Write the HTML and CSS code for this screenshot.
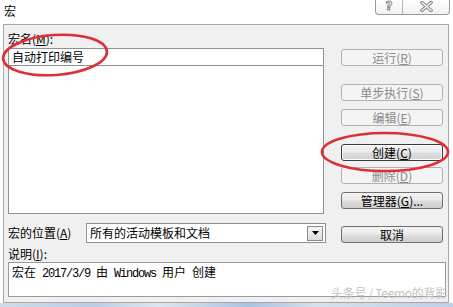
FILE: index.html
```html
<!DOCTYPE html>
<html lang="zh">
<head>
<meta charset="utf-8">
<title>宏</title>
<link rel="stylesheet" href="styles.css">
</head>
<body>
<div class="titlebar">
  <span class="title">宏</span>
  <div class="caption-btns">
    <span class="cbtn help">?</span>
    <span class="cbtn close">
      <svg width="13" height="11" viewBox="0 0 13 11">
        <path d="M2 1.5 L11 9.5 M11 1.5 L2 9.5" stroke="#8c8c8c" stroke-width="3.4" fill="none" stroke-linecap="square"/>
        <path d="M2 1.5 L11 9.5 M11 1.5 L2 9.5" stroke="#ffffff" stroke-width="1.2" fill="none" stroke-linecap="square"/>
      </svg>
    </span>
  </div>
</div>
<div class="panel">
  <div class="grid">
    <div class="left-top">
      <div class="lbl">宏名(<u>M</u>):</div>
      <div class="name-input">自动打印编号</div>
      <div class="listbox"></div>
    </div>
    <div class="btn-col">
      <div class="btn disabled b-run">运行(<u>R</u>)</div>
      <div class="btn disabled b-step">单步执行(<u>S</u>)</div>
      <div class="btn disabled b-edit">编辑(<u>E</u>)</div>
      <div class="btn default b-create">创建(<u>C</u>)</div>
      <div class="btn disabled b-del">删除(<u>D</u>)</div>
      <div class="btn b-mgr">管理器(<u>G</u>)...</div>
    </div>
    <div class="loc-row">
      <span class="loc-lbl">宏的位置(<u>A</u>)</span>
      <div class="select">
        <span class="select-text">所有的活动模板和文档</span>
        <span class="drop">
          <svg width="7" height="4" viewBox="0 0 7 4"><path d="M0 0 H7 L3.5 4 Z" fill="#000"/></svg>
        </span>
      </div>
    </div>
    <div class="btn b-cancel">取消</div>
    <div class="desc-area">
      <div class="lbl2">说明(<u>I</u>):</div>
      <div class="desc-box">宏在<span class="lat"> 2017/3/9 </span>由<span class="lat"> Windows </span>用户<span class="lat"> </span>创建</div>
    </div>
  </div>
</div>
<div class="strip"></div>
<div class="watermark">头条号 / Teemo的背影</div>
<svg class="marks" width="453" height="307" viewBox="0 0 453 307">
  <ellipse cx="55" cy="55" rx="52" ry="20" transform="rotate(-4 55 55)" fill="none" stroke="#dd2f36" stroke-width="2.6"/>
  <ellipse cx="385" cy="152" rx="63" ry="19" fill="none" stroke="#dd2f36" stroke-width="2.6"/>
</svg>
</body>
</html>
```

FILE: styles.css
```css
* { box-sizing: border-box; }
html, body {
  margin: 0;
  padding: 0;
  background: #ffffff;
  width: 453px;
  height: 307px;
  overflow: hidden;
  font-family: "Noto Sans CJK SC", "Liberation Sans", sans-serif;
  font-size: 12px;
  color: #000;
}
body { position: relative; }
u { text-decoration: underline; }

.titlebar {
  height: 24px;
  display: flex;
  align-items: flex-start;
  padding-left: 4px;
  padding-right: 3px;
}
.title {
  line-height: 22px;
  font-size: 12px;
}
.caption-btns {
  margin-left: auto;
  margin-top: -1px;
  display: flex;
  height: 16px;
  border: 1px solid #9a9a9a;
  border-top: none;
  border-radius: 0 0 4px 4px;
  background: linear-gradient(#ffffff, #f1f1f1);
}
.cbtn {
  display: flex;
  align-items: center;
  justify-content: center;
  height: 15px;
}
.help {
  width: 27px;
  border-right: 1px solid #b5b5b5;
  font-family: "DejaVu Sans", sans-serif;
  font-weight: bold;
  font-size: 12px;
  color: #ffffff;
  -webkit-text-stroke: 1px #8c8c8c;
  line-height: 15px;
}
.close { width: 46px; }

.panel {
  margin: 0 4px 0 3px;
  height: 279px;
  border: 1px solid #a8a8a8;
  background: #f0f0f0;
  padding: 6px 5px 6px 4px;
}
.grid {
  display: grid;
  grid-template-columns: 318px 102px;
  column-gap: 15px;
}
.left-top { display: flex; flex-direction: column; }
.lbl { line-height: 16px; height: 16px; }
.name-input {
  width: 316px;
  height: 18px;
  margin-top: 1px;
  border: 1px solid #8e8f8f;
  background: #fff;
  padding-left: 3px;
  line-height: 16px;
  font-size: 12px;
}
.listbox {
  width: 316px;
  height: 149px;
  margin-top: -1px;
  border: 1px solid #8e8f8f;
  background: #fff;
}

.btn-col { display: flex; flex-direction: column; }
.btn {
  width: 102px;
  height: 17px;
  border: 1px solid #707070;
  border-radius: 3px;
  background: linear-gradient(#f3f3f3 0%, #ebebeb 48%, #dddddd 52%, #d0d0d0 100%);
  text-align: center;
  line-height: 15px;
  font-size: 12px;
  color: #000;
}
.btn.disabled {
  border-color: #adb2b5;
  background: #f4f4f4;
  color: #8a8a8a;
}
.btn.default {
  border-color: #3a3a3a;
  box-shadow: inset 0 0 0 1px #ffffff;
}
.b-run { margin-top: 18px; }
.b-step { margin-top: 18px; }
.b-edit { margin-top: 8px; }
.b-create { margin-top: 18px; }
.b-del { margin-top: 6px; }
.b-mgr { margin-top: 8px; }

.loc-row {
  margin-top: 9px;
  display: flex;
  align-items: center;
  height: 20px;
}
.loc-lbl { width: 78px; line-height: 14px; }
.select {
  width: 240px;
  height: 20px;
  border: 1px solid #8e8f8f;
  background: #fff;
  display: flex;
  align-items: center;
  padding-left: 3px;
  padding-right: 2px;
}
.select-text { flex: 1; line-height: 16px; }
.drop {
  width: 16px;
  height: 15px;
  border: 1px solid #8a8a8a;
  background: linear-gradient(#f6f6f6, #dcdcdc);
  display: flex;
  align-items: center;
  justify-content: center;
}
.b-cancel { align-self: end; margin-top: 9px; }

.desc-area {
  grid-column: 1 / -1;
  margin-top: 4px;
}
.lbl2 { line-height: 14px; height: 14px; }
.desc-box {
  width: 438px;
  height: 35px;
  margin-top: 1px;
  border: 1px solid #9a9a9a;
  background: #fff;
  padding: 2px 0 0 3px;
  line-height: 14px;
  white-space: pre;
}
.lat {
  font-family: "Liberation Mono", monospace;
  letter-spacing: -1.2px;
}

.strip {
  height: 4px;
  background: linear-gradient(90deg, #cfdceb 0%, #b9cde3 20%, #dde6ef 35%, #a9c3e0 55%, #d6e1ec 70%, #bcd0e6 100%);
}
.watermark {
  position: absolute;
  left: 331px;
  top: 286px;
  font-size: 12px;
  line-height: 14px;
  color: #c4c4c4;
  letter-spacing: -0.3px;
}
.marks {
  position: absolute;
  left: 0;
  top: 0;
  pointer-events: none;
}
```
